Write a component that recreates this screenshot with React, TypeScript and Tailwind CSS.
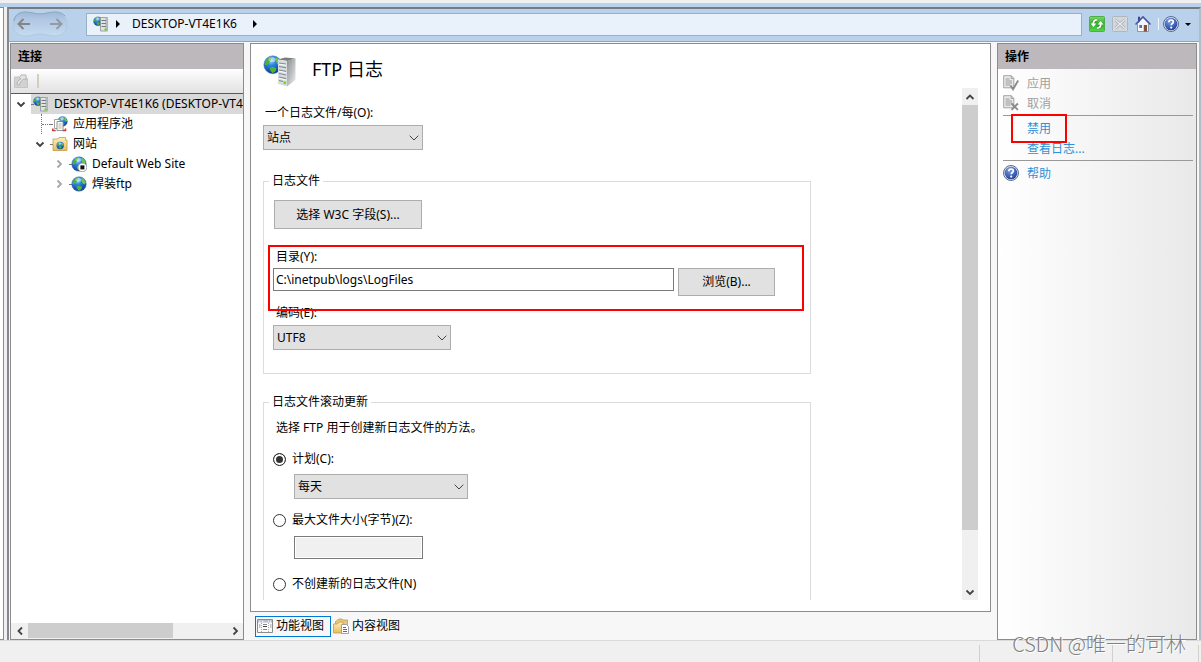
import type { ReactNode } from "react";
import clsx from "clsx";

function Defs() {
  return (
    <svg width="0" height="0" className="absolute" aria-hidden="true">
      <defs>
        <radialGradient id="ocean" cx="0.4" cy="0.25" r="0.8">
          <stop offset="0" stopColor="#a9e2ff" />
          <stop offset="0.35" stopColor="#2c86e0" />
          <stop offset="1" stopColor="#0f2f93" />
        </radialGradient>
        <linearGradient id="tower" x1="0" y1="0" x2="1" y2="1">
          <stop offset="0" stopColor="#8b8f90" />
          <stop offset="0.5" stopColor="#b9bdbd" />
          <stop offset="1" stopColor="#f1f3f3" />
        </linearGradient>
        <linearGradient id="folder" x1="0" y1="0" x2="0" y2="1">
          <stop offset="0" stopColor="#fff0b8" />
          <stop offset="1" stopColor="#e5bd62" />
        </linearGradient>
        <linearGradient id="green" x1="0" y1="0" x2="0" y2="1">
          <stop offset="0" stopColor="#7cda6c" />
          <stop offset="0.5" stopColor="#2fb02a" />
          <stop offset="1" stopColor="#5ad84c" />
        </linearGradient>
        <radialGradient id="help" cx="0.4" cy="0.25" r="0.8">
          <stop offset="0" stopColor="#7fa3e6" />
          <stop offset="1" stopColor="#1b3c99" />
        </radialGradient>
        <linearGradient id="nav" x1="0" y1="0" x2="0" y2="1">
          <stop offset="0" stopColor="#9fb8d5" />
          <stop offset="0.3" stopColor="#afc7e2" />
          <stop offset="1" stopColor="#c6dbf2" />
        </linearGradient>
      </defs>
    </svg>
  );
}

function GlobeShape() {
  return (
    <g>
      <circle cx="8" cy="8" r="7.3" fill="url(#ocean)" stroke="#3c6fae" strokeWidth="0.4" />
      <path d="M1.8 6 3.5 3 6 1.6l1.4.8-1 1.6-.6 1.8L4 7 3.2 8.600 1.200 8z" fill="#4fae3c" />
      <path d="M10.500 1.800 13 3.200l1.800 3.400-1 1.800-2-.8L10.600 5z" fill="#6bc94a" />
      <path d="M5.500 10.400 8.400 9.600l2.600 1.400-.6 2.200L8 15l-1.800-2z" fill="#4db82f" />
      <ellipse cx="7.500" cy="3.800" rx="3" ry="1.900" fill="#fff" opacity="0.4" />
    </g>
  );
}

function GlobeIcon({ stopped = false }: { stopped?: boolean }) {
  return (
    <svg viewBox="0 0 16 16" className="size-4 shrink-0">
      <GlobeShape />
      {stopped && (
        <g>
          <circle cx="11.4" cy="11.400" r="4.400" fill="#fff" stroke="#8a8a8a" strokeWidth="0.8" />
          <rect x="9.400" y="9.400" width="4" height="4" fill="#111" />
        </g>
      )}
    </svg>
  );
}

function ServerIcon() {
  return (
    <svg viewBox="0 0 34 34" className="size-[34px] shrink-0">
      <g transform="translate(0 1) scale(1.22)">
        <GlobeShape />
      </g>
      <path d="M15 5.500 22 3.500 32.500 4.500 24.500 7z" fill="#7a7e7f" />
      <path d="M15 5.500 24 7v25.500l-9-2.500z" fill="#d9dddf" />
      <path d="M24 7 32.500 4.500v21.500L24 32.500z" fill="url(#tower)" />
      <path
        d="M16 9l7 1M16 12.500l7 1.200M16 16l7 1.300M16 19.500l7 1.500M16 23l7 1.700M16 26.500l4 1"
        stroke="#858c90"
        strokeWidth="1.200"
      />
      <path d="M16 10.300l7 1M16 17.300l7 1.300M16 24.300l7 1.700" stroke="#fff" strokeWidth="0.800" />
      <rect x="20.500" y="27.500" width="2.600" height="2.600" fill="#6ee000" />
    </svg>
  );
}

function SmallServerIcon() {
  return (
    <svg viewBox="0 0 16 16" className="size-4 shrink-0">
      <g transform="translate(0 .3) scale(.62)">
        <GlobeShape />
      </g>
      <path d="M7.500 1.500h7v13.500h-7z" fill="#dfe3e5" stroke="#8b9194" strokeWidth="0.800" />
      <path d="M12.500 1.500h2.300v13.500h-2.300z" fill="#b4babd" />
      <path d="M8.500 4.500h4.500M8.500 7.500h4.500M8.500 10.500h4.500" stroke="#747b7f" />
      <rect x="11.500" y="12.500" width="2" height="2" fill="#5ed800" />
    </svg>
  );
}

function PoolIcon() {
  return (
    <svg viewBox="0 0 16 16" className="size-4 shrink-0">
      <g transform="translate(5 0) scale(.68)">
        <GlobeShape />
      </g>
      <path d="M.7 12.500v2h3M10.500 14.500h3v-2" fill="none" stroke="#d33c36" strokeWidth="1.600" />
      <path d="M2.500 3.500H8v9H2.500z" fill="#fff" stroke="#8c8c8c" strokeWidth="0.800" />
      <path d="M5 5.500h6v9H5z" fill="#fff" stroke="#777" strokeWidth="0.800" />
      <path d="M6.500 8h3M6.500 10h3M6.500 12h3" stroke="#888" strokeWidth="0.700" />
    </svg>
  );
}

function SitesIcon() {
  return (
    <svg viewBox="0 0 16 16" className="size-4 shrink-0">
      <path d="M1 3h5l1-1.500h6.500V4H15v10.500H1z" fill="url(#folder)" stroke="#c49c48" strokeWidth="0.800" />
      <g transform="translate(4.200 5.500) scale(.5)">
        <GlobeShape />
      </g>
    </svg>
  );
}

function HelpIcon() {
  return (
    <svg viewBox="0 0 16 16" className="size-4 shrink-0">
      <circle cx="8" cy="8" r="7.500" fill="#dfe5ef" stroke="#4f5d7d" strokeWidth="0.900" />
      <circle cx="8" cy="8" r="6.300" fill="url(#help)" />
      <path
        d="M5.800 6.300C5.800 4.800 6.800 4 8.100 4s2.200.8 2.200 2c0 1.500-2.100 1.600-2.100 3.200"
        fill="none"
        stroke="#fff"
        strokeWidth="1.700"
      />
      <circle cx="8.200" cy="11.600" r="1.100" fill="#fff" />
    </svg>
  );
}

function PageIcon({ mark }: { mark: "check" | "cross" }) {
  return (
    <svg viewBox="0 0 16 16" className="size-4 shrink-0">
      <path d="M.7.7h7.600l2.500 2.600v9.500H.7z" fill="#e9e9e9" stroke="#a3a3a3" />
      <path d="M8.200.7v2.800h2.600" fill="none" stroke="#a3a3a3" />
      <path d="M2.500 4h4M2.500 6h6.500M2.500 8h6.500M2.500 10h5" stroke="#999" />
      {mark === "check" ? (
        <path d="M7.500 10.500 10 14.300 15.200 5.500" fill="none" stroke="#8b8b8b" strokeWidth="1.900" />
      ) : (
        <path d="M8.500 8.500l6.400 6.400M14.900 8.500l-6.400 6.400" stroke="#8b8b8b" strokeWidth="1.900" />
      )}
    </svg>
  );
}

function Chevron({ dir }: { dir: "up" | "down" | "left" | "right" }) {
  const d = {
    up: "M1.5 7 5 3.5 8.5 7",
    down: "M1.5 3.5 5 7 8.5 3.5",
    left: "M7 1.5 3.5 5 7 8.5",
    right: "M3.5 1.5 7 5 3.5 8.5",
  };
  return (
    <svg viewBox="0 0 10 10" className="size-[10px] shrink-0">
      <path d={d[dir]} fill="none" stroke="currentColor" strokeWidth="1.800" />
    </svg>
  );
}

function Caret() {
  return (
    <svg viewBox="0 0 4 8" className="h-2 w-1 shrink-0">
      <path d="M0 0 4 4 0 8z" />
    </svg>
  );
}

function Toolbar() {
  return (
    <header className="flex h-[33px] shrink-0 items-center border-b border-[#8ea6c0] bg-[#b9d1ea] pr-2 pb-[2px] pl-[3px]">
      <div className="relative h-7 w-14">
        <svg viewBox="0 0 56 28" className="absolute inset-0 h-7 w-14">
          <path
            d="M13 2C20 2 23 4 28 4S37 2 43 2c8 0 12 5 12 12s-4 12-12 12c-6 0-10-2-15-2s-8 2-15 2C5 26 1 21 1 14S5 2 13 2z"
            fill="url(#nav)"
            stroke="#b3c9e3"
          />
          <path d="M2 11C3 5 7 2 13 2c7 0 10 2 15 2s9-2 15-2c5 0 8 2 10 4" fill="none" stroke="#8aa3c1" />
        </svg>
        <div className="relative flex h-full items-center justify-between px-[5px] text-[#858585]">
          {["后退", "前进"].map((label, i) => (
            <button key={label} aria-label={label}>
              <svg viewBox="0 0 14 12" className={clsx("h-3 w-[14px]", i === 1 && "-scale-x-100 opacity-70")}>
                <path d="M6.500 1 1.500 6l5 5M1.500 6H13" fill="none" stroke="currentColor" strokeWidth="2" />
              </svg>
            </button>
          ))}
        </div>
      </div>
      <nav className="ml-[18px] flex h-[23px] flex-1 items-center border border-[#9ab0c8] bg-[#e9f1fa] pl-[6px]">
        <SmallServerIcon />
        <span className="ml-[7px]">
          <Caret />
        </span>
        <a href="#server" className="mr-4 ml-3">
          DESKTOP-VT4E1K6
        </a>
        <Caret />
      </nav>
      <div className="ml-[7px] flex items-center">
        <button aria-label="刷新">
          <svg viewBox="0 0 16 16" className="size-4">
            <rect x=".5" y=".5" width="15" height="15" rx="1" fill="url(#green)" stroke="#4fae48" />
            <g stroke="#1c7418" strokeWidth="3.400" fill="none">
              <path d="M7.500 4.500C5.500 4.300 4.500 5.200 4.500 8M8.500 11.500c2 .2 3-.7 3-3.500" />
            </g>
            <g stroke="#fff" strokeWidth="2" fill="none">
              <path d="M7.800 4C5.500 3.800 4.300 5 4.300 8M8.200 12c2.300.2 3.500-1 3.500-4" />
            </g>
            <path d="M1.500 7.500h5.800L4.400 11zM8.700 8.500h5.800L11.600 5z" fill="#fff" />
          </svg>
        </button>
        <button aria-label="停止" className="ml-[7px]">
          <svg viewBox="0 0 16 16" className="size-4">
            <rect x=".5" y=".5" width="15" height="15" rx="1" fill="#d3d8dc" stroke="#b0b8bf" />
            <path d="M3.500 4l9 8M12.500 4l-9 8" stroke="#9ba1a6" strokeWidth="2.800" />
            <path d="M3.500 4l9 8M12.500 4l-9 8" stroke="#eef0f2" strokeWidth="1.400" />
          </svg>
        </button>
        <button aria-label="主页" className="ml-[7px]">
          <svg viewBox="0 0 16 16" className="size-4">
            <path d="M2.500 7.500v8h11v-8L8 1.500z" fill="#f4f5f8" stroke="#7b83a5" strokeWidth="0.800" />
            <path d="M3 .8h2V5L3 7z" fill="#38449a" />
            <path d="M.5 8.500 8 .8l7.500 7.700" fill="none" stroke="#4653a8" strokeWidth="1.500" />
            <path d="M8.800 9h3.200v6.500H8.800z" fill="#7f503c" />
            <path d="M4.300 9h2.700v3H4.300z" fill="#4c73bd" />
          </svg>
        </button>
        <span className="mr-1 ml-[7px] h-3 w-px bg-[#eef5fc]" />
        <button aria-label="帮助" className="flex items-center gap-[6px]">
          <HelpIcon />
          <svg viewBox="0 0 6 3" className="h-[3px] w-[6px]">
            <path d="M0 0h6L3 3z" />
          </svg>
        </button>
      </div>
    </header>
  );
}

function PanelTitle({ children }: { children: ReactNode }) {
  return <h2 className="flex h-[25px] shrink-0 items-center bg-[#bcb8bb] px-[7px] pt-px font-bold">{children}</h2>;
}

const indents = ["", "pl-[19px]", "pl-[38px]"];

function TreeRow({
  depth,
  open,
  icon,
  selected = false,
  children,
}: {
  depth: number;
  open?: boolean;
  icon: ReactNode;
  selected?: boolean;
  children: ReactNode;
}) {
  return (
    <li className={clsx("flex h-5 items-center", indents[depth])}>
      <span className="flex h-5 w-5 shrink-0 items-center justify-center">
        {open === undefined ? (
          <span className="flex h-full w-full items-center pl-[11px]">
            <span className="h-full border-l border-dotted border-[#777]" />
            <span className="flex-1 border-t border-dotted border-[#777]" />
          </span>
        ) : (
          <button
            aria-label={open ? "折叠" : "展开"}
            className={clsx(
              "flex h-full items-center justify-center",
              depth === 2 ? "text-[#a6a6a6]" : "text-[#404040]",
            )}
          >
            <Chevron dir={open ? "down" : "right"} />
          </button>
        )}
      </span>
      <span className={clsx("flex h-full flex-1 items-center", selected && "bg-[#d9d9d9]")}>
        <span className="w-[2px] shrink-0 border-t border-dotted border-[#777]" />
        {icon}
        <a href="#node" className="ml-[5px] whitespace-nowrap">
          {children}
        </a>
      </span>
    </li>
  );
}

function Connections() {
  return (
    <aside className="flex w-[234px] shrink-0 flex-col overflow-hidden border border-[#8c8c8c] bg-white">
      <PanelTitle>连接</PanelTitle>
      <div className="flex h-[25px] shrink-0 items-center border-b border-[#5b5573] bg-linear-to-b from-white to-[#e3e1e3] pl-[3px]">
        <button aria-label="连接" disabled>
          <svg viewBox="0 0 14 14" className="size-[14px]">
            <path d="M.5 3H5l1 1.500h7.500v9H.5z" fill="#d2d2d2" stroke="#c4c4c4" />
            <path d="M3 11c0-3 1-5 4-6L5.500 3.500 7 1h5v5l-2-1C8 6 6 8 5.500 11z" fill="#e4e4e4" stroke="#b5b5b5" />
          </svg>
        </button>
        <span className="ml-[9px] h-[14px] w-[2px] bg-[#d3cfbc]" />
      </div>
      <ul className="flex-1 overflow-hidden">
        <TreeRow depth={0} open icon={<SmallServerIcon />} selected>
          DESKTOP-VT4E1K6 (DESKTOP-VT4E1K6\Administrator)
        </TreeRow>
        <TreeRow depth={1} icon={<PoolIcon />}>
          应用程序池
        </TreeRow>
        <TreeRow depth={1} open icon={<SitesIcon />}>
          网站
        </TreeRow>
        <TreeRow depth={2} open={false} icon={<GlobeIcon stopped />}>
          Default Web Site
        </TreeRow>
        <TreeRow depth={2} open={false} icon={<GlobeIcon />}>
          焊装ftp
        </TreeRow>
      </ul>
      <div className="flex h-4 shrink-0 items-center bg-[#f0f0f0] text-[#444]">
        <span className="flex w-[17px] justify-center">
          <Chevron dir="left" />
        </span>
        <span className="flex h-full flex-1">
          <span className="h-[15px] w-[73%] bg-[#cdcdcd]" />
        </span>
        <span className="flex w-[17px] justify-center">
          <Chevron dir="right" />
        </span>
      </div>
    </aside>
  );
}

function Select({ id, label, value, className }: { id: string; label?: string; value: string; className: string }) {
  return (
    <div className={clsx("relative", className)}>
      <select
        id={id}
        aria-label={label}
        className="block h-[25px] w-full appearance-none border border-[#adadad] bg-[#e1e1e1] px-[3px] outline-none"
      >
        <option>{value}</option>
      </select>
      <svg viewBox="0 0 10 6" className="pointer-events-none absolute top-[10px] right-1 h-[6px] w-[10px]">
        <path d="M.7.7 5 5 9.300.7" fill="none" stroke="#444" />
      </svg>
    </div>
  );
}

function Radio({ id, checked, children }: { id: string; checked?: boolean; children: ReactNode }) {
  return (
    <div className="flex h-5 items-center gap-[6px]">
      <input
        id={id}
        type="radio"
        name="rollover"
        defaultChecked={checked}
        className="size-[13px] appearance-none rounded-full border border-[#333] bg-white checked:bg-[#333] checked:shadow-[inset_0_0_0_2px_white]"
      />
      <label htmlFor={id}>{children}</label>
    </div>
  );
}

const button = "border border-[#adadad] bg-[#e1e1e1] text-center";

function LogSettings() {
  return (
    <main className="flex min-h-0 flex-1 flex-col border border-[#8c8c8c] bg-white pb-[11px] pl-3">
      <div className="flex h-11 shrink-0 items-end">
        <ServerIcon />
        <h1 className="ml-[15px] pb-[5px] text-lg">FTP 日志</h1>
      </div>
      <div className="flex min-h-0 flex-1">
        <div className="min-w-0 flex-1 overflow-hidden pt-[15px]">
          <label htmlFor="per" className="block h-[22px] pl-[2px] leading-5">
            一个日志文件/每(O):
          </label>
          <Select id="per" value="站点" className="w-40" />

          <fieldset className="relative mt-[21px] h-[203px] w-[548px] border border-[#dcdcdc] pl-[9px]">
            <legend className="-ml-1 px-[3px] leading-5">日志文件</legend>
            <button className={clsx(button, "mt-[9px] ml-px block h-[29px] w-[148px]")}>选择 W3C 字段(S)...</button>
            <label htmlFor="directory" className="mt-[18px] block h-[21px] pl-[3px] leading-5">
              目录(Y):
            </label>
            <div className="flex items-start gap-1">
              <input
                id="directory"
                defaultValue="C:\inetpub\logs\LogFiles"
                className="h-[23px] w-[401px] border border-[#7a7a7a] bg-white px-[2px] outline-none"
              />
              <button className={clsx(button, "h-[28px] w-[97px]")}>浏览(B)...</button>
            </div>
            <label htmlFor="encoding" className="mt-[7px] block h-[22px] pl-[3px] leading-5">
              编码(E):
            </label>
            <Select id="encoding" value="UTF8" className="w-[178px]" />
            <div className="pointer-events-none absolute top-[54px] left-1 h-[66px] w-[536px] border-2 border-[#f00]" />
          </fieldset>

          <fieldset className="mt-[18px] h-[220px] w-[548px] border border-[#dcdcdc] pl-[9px]">
            <legend className="-ml-1 px-[3px] leading-5">日志文件滚动更新</legend>
            <p className="mt-[6px] mb-[11px] pl-[3px] leading-5">选择 FTP 用于创建新日志文件的方法。</p>
            <Radio id="schedule" checked>
              计划(C):
            </Radio>
            <Select id="period" label="计划" value="每天" className="mt-[5px] mb-[11px] ml-[21px] w-[174px]" />
            <Radio id="maximum">最大文件大小(字节)(Z):</Radio>
            <input
              aria-label="最大文件大小"
              disabled
              className="mt-[6px] mb-[15px] ml-[21px] block h-[23px] w-[129px] border border-[#7a7a7a] bg-[#f0f0f0] shadow-[inset_0_0_0_1px_white]"
            />
            <Radio id="never">不创建新的日志文件(N)</Radio>
          </fieldset>
        </div>
        <div className="mr-3 flex w-4 flex-col items-center bg-[#f0f0f0] text-[#444]">
          <span className="flex h-[17px] items-center">
            <Chevron dir="up" />
          </span>
          <span className="flex w-full flex-1 flex-col">
            <span className="h-[89%] bg-[#cdcdcd]" />
          </span>
          <span className="flex h-[17px] items-center">
            <Chevron dir="down" />
          </span>
        </div>
      </div>
    </main>
  );
}

function ViewTabs() {
  return (
    <div className="flex h-7 shrink-0 items-center pl-[5px]">
      <button className="flex h-[21px] items-center gap-[3px] border border-[#0078d7] pr-[6px] pl-px">
        <svg viewBox="0 0 16 16" className="size-4">
          <path d="M.5 1.500h15v13H.5z" fill="#fafafa" stroke="#8b8b8b" />
          <path d="M1 2h14v2.500H1z" fill="#b8bec8" />
          <path d="M2 3.200h1.500M5 3.200h1.500M11 3.200h1M13 3.200h1" stroke="#fff" />
          <path d="M4.500 5v9M11.500 5v9" stroke="#aaa" strokeDasharray="1 1" />
          <path d="M6 6.500h4M6 11.500h4M2 7h1.500M2 9h1.500M13 7h1.500M13 9h1.500" stroke="#888" />
          <path d="M6 8.500h4" stroke="#444" />
        </svg>
        功能视图
      </button>
      <button className="flex h-[21px] items-center gap-[3px] px-[2px]">
        <svg viewBox="0 0 16 16" className="size-4">
          <path d="M2.500 3.500 6 1h3l1 1h4.500v11h-12z" fill="#e8c67a" stroke="#c29b4c" strokeWidth="0.800" />
          <path d="M.5 6h4L6 4h4v11H.5z" fill="url(#folder)" stroke="#c29b4c" strokeWidth="0.800" />
          <path d="M8.500 6.500h5l2 2v7h-7z" fill="#fff" stroke="#8a8fa0" strokeWidth="0.800" />
          <path d="M10 9.500h3M10 11.500h4M10 13.500h4" stroke="#3e6fc2" />
        </svg>
        内容视图
      </button>
    </div>
  );
}

function Action({ icon, disabled, children }: { icon?: ReactNode; disabled?: boolean; children: ReactNode }) {
  return (
    <li className="flex h-5 items-center gap-2">
      <span className="w-4 shrink-0">{icon}</span>
      {disabled ? (
        <button disabled className="pt-[2px] text-[#a0a0a0]">
          {children}
        </button>
      ) : (
        <a href="#action" className="pt-[2px] text-[#2b91d8]">
          {children}
        </a>
      )}
    </li>
  );
}

function Actions() {
  return (
    <aside className="w-[200px] shrink-0 border border-[#8c8c8c] bg-linear-to-r from-white to-[#e9e9e9]">
      <PanelTitle>操作</PanelTitle>
      <div className="relative pt-1 pr-[3px] pl-[5px]">
        <ul>
          <Action icon={<PageIcon mark="check" />} disabled>
            应用
          </Action>
          <Action icon={<PageIcon mark="cross" />} disabled>
            取消
          </Action>
        </ul>
        <ul className="mt-[2px] border-y border-[#999] pt-[2px] pb-[2px]">
          <Action>禁用</Action>
          <Action>查看日志...</Action>
        </ul>
        <ul className="pt-[2px]">
          <Action icon={<HelpIcon />}>帮助</Action>
        </ul>
        <div className="pointer-events-none absolute top-[45px] left-[13px] h-[29px] w-[56px] border-2 border-[#f00]" />
      </div>
    </aside>
  );
}

export default function App() {
  return (
    <div className="flex h-screen flex-col overflow-hidden bg-[#f0f0f0] pt-[3px] font-['Noto_Sans','Noto_Sans_CJK_SC',sans-serif] text-xs text-black">
      <Defs />
      <div className="h-1 shrink-0 bg-[#b9d1ea]" />
      <div className="flex min-h-0 flex-1">
        <div className="w-1 border-t border-r border-b border-[#8c8c8c] bg-white" />
        <div className="ml-[3px] flex min-w-0 flex-1 flex-col border-t-2 border-r-2 border-l-2 border-t-[#747b84] border-r-[#aebdcc] border-l-[#85888c] bg-[#f7f7f7]">
          <Toolbar />
          <div className="flex min-h-0 flex-1 gap-[6px] pt-px pr-[2px] pl-px">
            <Connections />
            <div className="flex min-w-0 flex-1 flex-col">
              <LogSettings />
              <ViewTabs />
            </div>
            <Actions />
          </div>
        </div>
      </div>
      <footer className="relative flex h-[22px] shrink-0 justify-end border-t border-[#d9d9d9] pt-1 pr-[2px]">
        <span className="w-[133px] border-l border-[#d0d0d0]" />
        <span className="w-[87px] border-x border-[#d0d0d0]" />
        <span className="absolute right-[15px] bottom-1 font-['Noto_Sans_CJK_SC',sans-serif] text-xl leading-7 font-light text-[#808080] [text-shadow:1px_1px_0_white]">
          CSDN @唯一的可林
        </span>
      </footer>
    </div>
  );
}
